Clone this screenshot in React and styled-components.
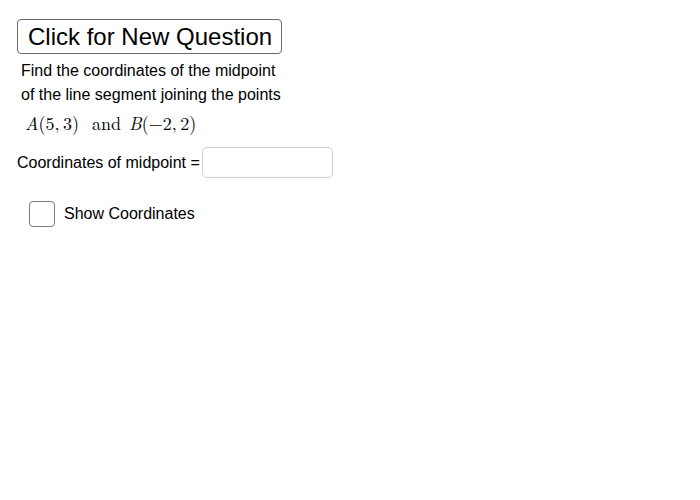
import React, { useState } from "react";
import styled, { createGlobalStyle } from "styled-components";

const GlobalStyle = createGlobalStyle`
  html, body {
    margin: 0;
    padding: 0;
    background: #ffffff;
    font-family: "Liberation Sans", Arial, sans-serif;
    color: #000;
  }
`;

const Applet = styled.div`
  width: 700px;
  height: 500px;
  display: flex;
  flex-direction: column;
  align-items: flex-start;
  padding: 19px 0 0 17px;
  box-sizing: border-box;
`;

const QuestionButton = styled.button`
  height: 35px;
  width: 265px;
  box-sizing: border-box;
  padding: 0 0 0 10px;
  text-align: left;
  background: #fff;
  border: 1px solid #6b6b6b;
  border-radius: 4px;
  font-family: "Liberation Sans", Arial, sans-serif;
  font-size: 24px;
  color: #000;
  cursor: pointer;
`;

const Prompt = styled.div`
  margin: 5px 0 0 4px;
  font-size: 16px;
  line-height: 24px;
`;

const MathLine = styled.div`
  margin: 4px 0 0 8px;
  font-family: "Latin Modern Roman", "DejaVu Serif", "Liberation Serif", serif;
  font-size: 18px;
  line-height: 24px;
  display: flex;
  gap: 13px;
`;

const MathGroup = styled.span`
  margin-right: ${({ tight }) => (tight ? "-5px" : "0")};
`;

const Var = styled.i`
  font-style: italic;
`;

const AnswerRow = styled.div`
  margin-top: 12px;
  display: flex;
  align-items: center;
  font-size: 16px;
`;

const AnswerInput = styled.input`
  margin-left: 2px;
  width: 131px;
  height: 31px;
  box-sizing: border-box;
  border: 1px solid #cfcfcf;
  border-radius: 5px;
  font-size: 16px;
  padding: 0 6px;
  outline: none;
`;

const CheckRow = styled.label`
  margin: 23px 0 0 12px;
  display: flex;
  align-items: center;
  gap: 9px;
  font-size: 16px;
  cursor: pointer;
`;

const Box = styled.span`
  width: 26px;
  height: 26px;
  box-sizing: border-box;
  border: 1.5px solid #7a7a7a;
  border-radius: 4px;
  display: flex;
  align-items: center;
  justify-content: center;
  background: ${({ checked }) => (checked ? "#6557d2" : "#fff")};
`;

export default function App() {
  const [show, setShow] = useState(false);

  return (
    <Applet>
      <GlobalStyle />
      <QuestionButton>Click for New Question</QuestionButton>
      <Prompt>
        Find the coordinates of the midpoint
        <br />
        of the line segment joining the points
      </Prompt>
      <MathLine>
        <MathGroup>
          <Var>A</Var>(5,{"\u2009"}3)
        </MathGroup>
        <MathGroup tight>and</MathGroup>
        <MathGroup>
          <Var>B</Var>(−2,{"\u2009"}2)
        </MathGroup>
      </MathLine>
      <AnswerRow>
        Coordinates of midpoint =
        <AnswerInput type="text" />
      </AnswerRow>
      <CheckRow onClick={() => setShow(!show)}>
        <Box checked={show}>
          {show && (
            <svg width="16" height="16" viewBox="0 0 16 16">
              <path d="M3 8l3.5 3.5L13 4.5" stroke="#fff" strokeWidth="2" fill="none" />
            </svg>
          )}
        </Box>
        Show Coordinates
      </CheckRow>
    </Applet>
  );
}
